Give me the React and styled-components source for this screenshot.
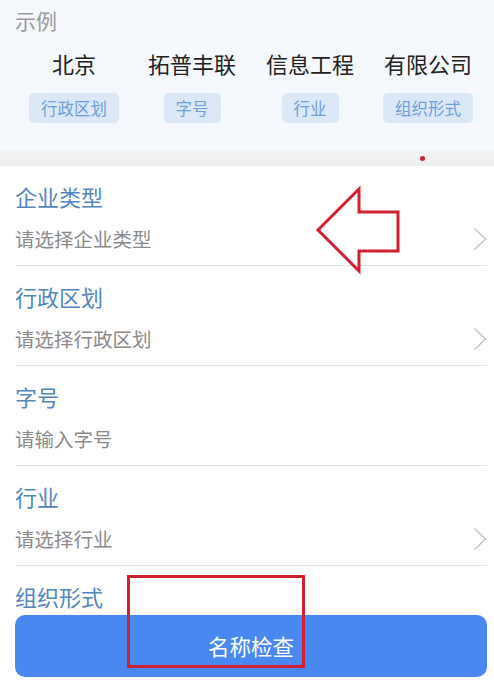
import React from "react";
import styled, { createGlobalStyle } from "styled-components";

const GlobalStyle = createGlobalStyle`
  html, body {
    margin: 0;
    padding: 0;
    background: #fff;
    font-family: "Noto Sans CJK SC", "Noto Sans", sans-serif;
  }
`;

const Page = styled.div`
  position: relative;
  width: 494px;
  height: 680px;
  overflow: hidden;
  background: #fff;
`;

const Example = styled.div`
  background: #f5f8fc;
  height: 150px;
  padding-top: 5px;
  box-sizing: border-box;
`;

const ExampleTitle = styled.div`
  padding-left: 15px;
  font-size: 21px;
  line-height: 30px;
  color: #9b9b9b;
`;

const Columns = styled.div`
  display: grid;
  grid-template-columns: repeat(4, 118px);
  margin: 13px 0 0 15px;
`;

const Column = styled.div`
  display: flex;
  flex-direction: column;
  align-items: center;
  gap: 15px;
`;

const Word = styled.div`
  font-size: 22px;
  line-height: 30px;
  color: #222;
`;

const Tag = styled.div`
  height: 30px;
  line-height: 30px;
  padding: 0 12px;
  border-radius: 5px;
  background: #dbe8f8;
  color: #6d9fd8;
  font-size: 16.5px;
`;

const Band = styled.div`
  height: 16px;
  display: flex;
  align-items: center;
  padding-left: 420px;
  background: linear-gradient(#f1f3f5, #eceef0);
`;

const Dot = styled.span`
  width: 5px;
  height: 5px;
  border-radius: 50%;
  background: #c0283a;
`;

const Form = styled.div`
  padding: 0 7px 0 15px;
`;

const Row = styled.div`
  padding: 15px 0 11px;
  border-bottom: ${(p) => (p.last ? "none" : "1px solid #e2e2e2")};
`;

const Label = styled.div`
  font-size: 22px;
  line-height: 30px;
  color: #5286bf;
`;

const ValueLine = styled.div`
  display: flex;
  align-items: center;
  justify-content: space-between;
  margin-top: 13px;
  height: 30px;
`;

const Value = styled.span`
  font-size: 19.5px;
  line-height: 30px;
  color: #8a8a8a;
`;

const Chevron = styled.svg`
  flex: none;
`;

const Button = styled.button`
  position: absolute;
  left: 15px;
  right: 7px;
  bottom: 3px;
  height: 62px;
  border: none;
  border-radius: 10px;
  background: #4a88f1;
  color: #fff;
  font-family: inherit;
  font-size: 21.5px;
  padding: 0 0 2px;
`;

const Highlight = styled.div`
  position: absolute;
  left: 127px;
  top: 575px;
  width: 172px;
  height: 87px;
  border: 3px solid #d2202f;
`;

const Arrow = styled.svg`
  position: absolute;
  left: 314px;
  top: 186px;
`;

const parts = [
  ["北京", "行政区划"],
  ["拓普丰联", "字号"],
  ["信息工程", "行业"],
  ["有限公司", "组织形式"],
];

const fields = [
  { label: "企业类型", value: "请选择企业类型", select: true },
  { label: "行政区划", value: "请选择行政区划", select: true },
  { label: "字号", value: "请输入字号" },
  { label: "行业", value: "请选择行业", select: true },
  { label: "组织形式", value: "", last: true },
];

export default function App() {
  return (
    <Page>
      <GlobalStyle />
      <Example>
        <ExampleTitle>示例</ExampleTitle>
        <Columns>
          {parts.map(([w, t]) => (
            <Column key={w}>
              <Word>{w}</Word>
              <Tag>{t}</Tag>
            </Column>
          ))}
        </Columns>
      </Example>
      <Band>
        <Dot />
      </Band>
      <Form>
        {fields.map((f) => (
          <Row key={f.label} last={f.last}>
            <Label>{f.label}</Label>
            <ValueLine>
              <Value>{f.value}</Value>
              {f.select && (
                <Chevron width="14" height="24" viewBox="0 0 14 24">
                  <path d="M1.5 1.5 L12.5 12 L1.5 22.5" fill="none" stroke="#c6c6c6" strokeWidth="1.5" />
                </Chevron>
              )}
            </ValueLine>
          </Row>
        ))}
      </Form>
      <Button>名称检查</Button>
      <Highlight />
      <Arrow width="90" height="90" viewBox="0 0 90 90">
        <path
          d="M4 44 L45 3 L45 26 L84 26 L84 65 L45 65 L45 85 Z"
          fill="none"
          stroke="#d2202f"
          strokeWidth="3"
        />
      </Arrow>
    </Page>
  );
}
